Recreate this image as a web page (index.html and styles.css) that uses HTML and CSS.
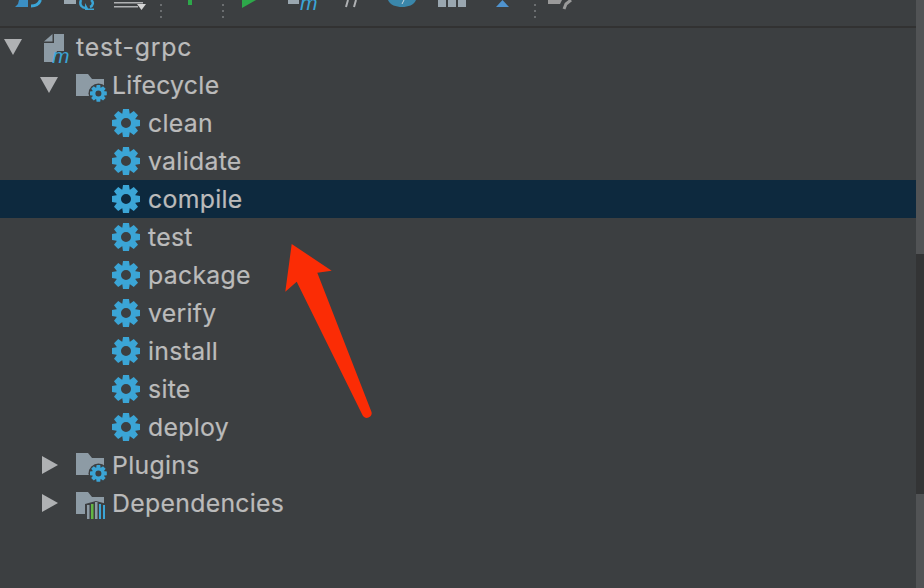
FILE: index.html
```html
<!DOCTYPE html>
<html lang="en">

<head>
  <meta charset="UTF-8" />
  <meta name="viewport" content="width=device-width, initial-scale=1.0" />
  <title>Maven</title>
  <link rel="stylesheet" href="styles.css">
</head>

<body>
  <svg width="0" height="0" class="defs">
    <defs>
      <g id="tooth">
        <path d="M11 0h6l.9 6h-7.800z"/>
      </g>
      <g id="gear">
        <g fill="#3ba5d6">
          <use href="#tooth"/>
          <use href="#tooth" transform="rotate(45 14 14)"/>
          <use href="#tooth" transform="rotate(90 14 14)"/>
          <use href="#tooth" transform="rotate(135 14 14)"/>
          <use href="#tooth" transform="rotate(180 14 14)"/>
          <use href="#tooth" transform="rotate(225 14 14)"/>
          <use href="#tooth" transform="rotate(270 14 14)"/>
          <use href="#tooth" transform="rotate(315 14 14)"/>
        </g>
        <circle cx="14" cy="14" r="7.500" fill="none" stroke="#3ba5d6" stroke-width="5"/>
      </g>
      <path id="folder" fill="#8d9ba5" d="M0 0h12l4 5h12v17H0z"/>
    </defs>
  </svg>

  <div class="panel">
    <div class="main">
      <div class="toolbar">
        <svg class="toolbar-icons" width="916" height="26" viewBox="0 0 916 26">
          <!-- top row of icons, cut off by the top edge -->
          <path fill="#3b8fc4" d="M19 0h9v7H15l3-3z"/>
          <path fill="none" stroke="#3ba5d6" stroke-width="3" d="M31 6c5 0 8-2 9.500-6"/>
          <rect x="64" width="12" height="4" fill="#9aa7b0"/>
          <path fill="none" stroke="#3ba5d6" stroke-width="2.500" d="M81 0c-2 5 1 8 5 8M91 0c3 2 2 6-1 7"/>
          <path fill="#3ba5d6" d="M85 3l4 7h-4zM88 8.500h6v1.500h-6z"/>
          <path fill="#afb1b3" d="M114 2h29v1.500h-29zM114 6h24v1.500h-24z"/>
          <path fill="#d5d5d5" d="M137 4h9l-4.500 6z"/>
          <path fill="#2da84a" d="M188 0h4v5h-4z"/>
          <path fill="#2da84a" d="M242 0h14l-14 8z"/>
          <rect x="288" width="11" height="4" fill="#9aa7b0"/>
          <text x="300" y="10" class="maven-m">m</text>
          <path fill="none" stroke="#afb1b3" stroke-width="2" d="M348 0l-2 7M356 0l-2 7"/>
          <path fill="#3a87ab" d="M388 0h28c-2 5-8 7-14 7s-12-2-14-7z"/>
          <path fill="none" stroke="#c8d8e0" d="M404 0l-2 4"/>
          <path fill="#9aa7b0" d="M438 0h8v7h-8zM448 0h8v7h-8zM458 0h8v7h-8z"/>
          <path fill="#4f93cf" d="M502.500 0l6.500 7h-13z"/>
          <path fill="#9a9a9a" d="M548 0h14l-2 4h-12z"/>
          <path fill="none" stroke="#9a9a9a" stroke-width="3" d="M571 0l-5 4-2 5"/>
          <g class="sep">
            <rect x="160" y="4" width="2" height="2"/><rect x="160" y="10" width="2" height="2"/><rect x="160" y="16" width="2" height="2"/>
            <rect x="222" y="4" width="2" height="2"/><rect x="222" y="10" width="2" height="2"/><rect x="222" y="16" width="2" height="2"/>
            <rect x="534" y="4" width="2" height="2"/><rect x="534" y="10" width="2" height="2"/><rect x="534" y="16" width="2" height="2"/>
          </g>
        </svg>
      </div>

      <ul class="tree">
        <li class="row lvl0">
          <span class="arrow down"></span>
          <svg class="icon project" width="32" height="32" viewBox="0 0 32 32">
            <path fill="#8d9ba5" d="M10 3h10v17h-7l-3.500 11H0V12h10z"/>
            <path fill="#8d9ba5" d="M0 10.500L8.500 3v7.500z"/>
            <text x="8" y="32" class="maven-m">m</text>
          </svg>
          <span class="project-name">test-grpc</span>
        </li>
        <li class="row lvl1">
          <span class="arrow down"></span>
          <svg class="icon" width="32" height="32" viewBox="0 0 32 32">
            <use href="#folder" y="5"/>
            <circle cx="22.500" cy="24.500" r="10" fill="#3c3f41"/>
            <use href="#gear" transform="translate(14 16) scale(.6)"/>
          </svg>
          <span>Lifecycle</span>
        </li>
        <li class="row lvl2"><svg class="icon" width="32" height="32" viewBox="0 0 32 32"><use href="#gear" y="2"/></svg><span>clean</span></li>
        <li class="row lvl2"><svg class="icon" width="32" height="32" viewBox="0 0 32 32"><use href="#gear" y="2"/></svg><span>validate</span></li>
        <li class="row lvl2 selected"><svg class="icon" width="32" height="32" viewBox="0 0 32 32"><use href="#gear" y="2"/></svg><span>compile</span></li>
        <li class="row lvl2"><svg class="icon" width="32" height="32" viewBox="0 0 32 32"><use href="#gear" y="2"/></svg><span>test</span></li>
        <li class="row lvl2"><svg class="icon" width="32" height="32" viewBox="0 0 32 32"><use href="#gear" y="2"/></svg><span>package</span></li>
        <li class="row lvl2"><svg class="icon" width="32" height="32" viewBox="0 0 32 32"><use href="#gear" y="2"/></svg><span>verify</span></li>
        <li class="row lvl2"><svg class="icon" width="32" height="32" viewBox="0 0 32 32"><use href="#gear" y="2"/></svg><span>install</span></li>
        <li class="row lvl2"><svg class="icon" width="32" height="32" viewBox="0 0 32 32"><use href="#gear" y="2"/></svg><span>site</span></li>
        <li class="row lvl2"><svg class="icon" width="32" height="32" viewBox="0 0 32 32"><use href="#gear" y="2"/></svg><span>deploy</span></li>
        <li class="row lvl1">
          <span class="arrow right"></span>
          <svg class="icon" width="32" height="32" viewBox="0 0 32 32">
            <use href="#folder" y="4"/>
            <circle cx="22.500" cy="24.500" r="10" fill="#3c3f41"/>
            <use href="#gear" transform="translate(14 16) scale(.6)"/>
          </svg>
          <span>Plugins</span>
        </li>
        <li class="row lvl1">
          <span class="arrow right"></span>
          <svg class="icon" width="32" height="32" viewBox="0 0 32 32">
            <use href="#folder" y="5"/>
            <path fill="#3c3f41" d="M9 17l11-3 11 3v17H9z"/>
            <path fill="#8d9ba5" d="M11 18h2.500v14H11z"/>
            <path fill="#62b543" d="M15 17h2.500v15H15z"/>
            <path fill="#8d9ba5" d="M19 15h2.500v17H19z"/>
            <path fill="#3ba5d6" d="M23 17h2v15h-2zM27 18h2v14h-2z"/>
          </svg>
          <span>Dependencies</span>
        </li>
      </ul>
    </div>

    <div class="scrollbar">
      <div class="thumb"></div>
    </div>
  </div>

  <!-- red arrow drawn over the screenshot -->
  <svg class="annotation" width="90" height="176" viewBox="0 0 90 176">
    <path fill="#fb2c05" d="M7.700 0L47.700 26.700 33.300 28.700 87.500 168c1.500 5-6 8.500-8.800 3.500L12.700 37.700 1.300 47.700z"/>
  </svg>
</body>

</html>
```

FILE: styles.css
```css
body {
  margin: 0;
  width: 924px;
  height: 588px;
  overflow: hidden;
  background: #3c3f41;
  color: #bbbbbb;
  font-family: Inter, 'Liberation Sans', sans-serif;
  font-size: 24.8px;
  letter-spacing: 0.3px;
  -webkit-text-stroke: 0.2px #bbbbbb;
  position: relative;
}

.defs {
  position: absolute;
}

.panel {
  display: flex;
  height: 588px;
}

.main {
  flex: 1;
  min-width: 0;
}

.toolbar {
  height: 26px;
  border-bottom: 2px solid #323232;
  overflow: hidden;
}

.toolbar-icons {
  display: block;
}

.sep rect {
  fill: #6b6e70;
}

.maven-m {
  font-family: 'Liberation Sans', Arial, sans-serif;
  font-style: italic;
  font-size: 21px;
  letter-spacing: 0;
  -webkit-text-stroke: 0;
  fill: #3ba5d6;
}

.tree {
  list-style: none;
  margin: 0;
  padding: 0;
}

.row {
  display: flex;
  align-items: center;
  height: 38px;
  white-space: nowrap;
}

.row.selected {
  background: #0d293e;
}

.lvl0 {
  padding-left: 4px;
}

.lvl1 {
  padding-left: 40px;
}

.lvl2 {
  padding-left: 112px;
}

.arrow {
  width: 0;
  height: 0;
  margin-right: 18px;
}

.arrow.down {
  border-left: 9px solid transparent;
  border-right: 9px solid transparent;
  border-top: 16px solid #afb1b3;
}

.arrow.right {
  border-top: 9px solid transparent;
  border-bottom: 9px solid transparent;
  border-left: 16px solid #afb1b3;
  margin-left: 2px;
}

.lvl0 .arrow {
  margin-right: 22px;
}

.icon {
  display: block;
  flex: none;
  margin-right: 4px;
  overflow: visible;
}

.icon.project {
  margin-right: 0;
}

.project-name {
  letter-spacing: 0.85px;
}

.scrollbar {
  width: 8px;
  background: #515355;
  padding-top: 254px;
  box-sizing: border-box;
}

.thumb {
  height: 240px;
  background: #333435;
}

.annotation {
  position: absolute;
  left: 284px;
  top: 244px;
}
```
